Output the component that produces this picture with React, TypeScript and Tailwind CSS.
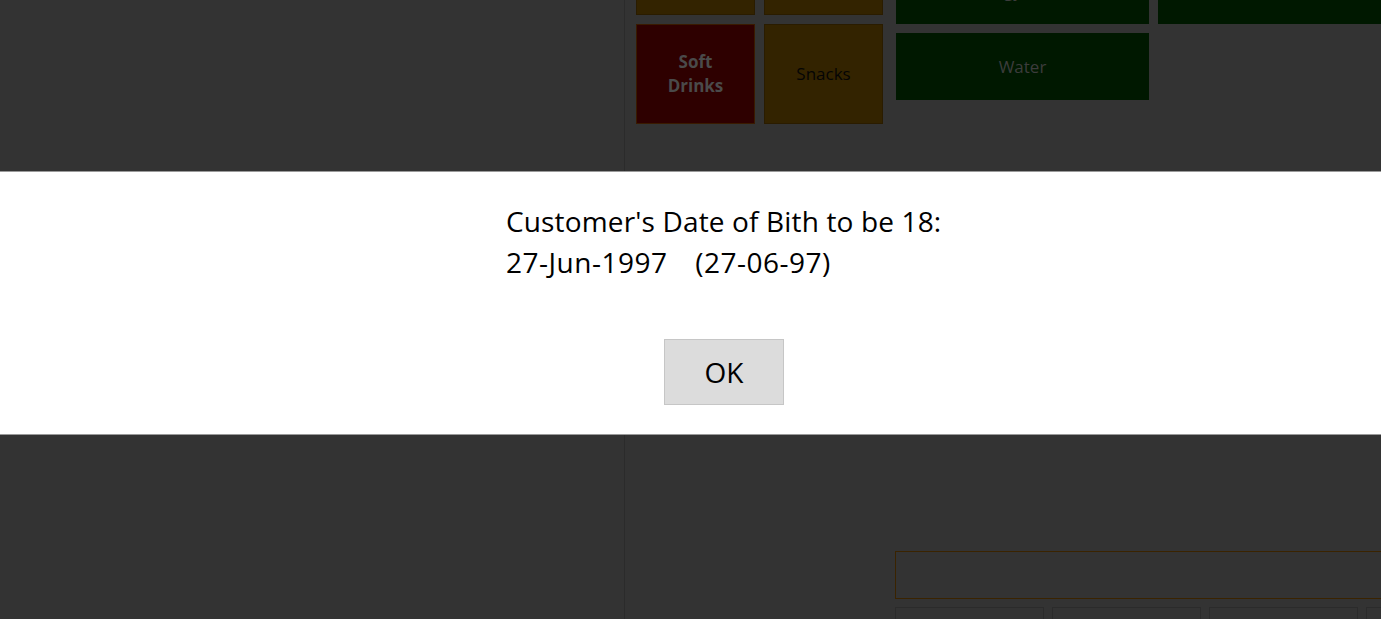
const font = { fontFamily: '"Open Sans", "Noto Sans", sans-serif' };

function Tile({
  className,
  children,
}: {
  className: string;
  children?: React.ReactNode;
}) {
  return (
    <div
      className={`flex items-center justify-center text-center text-[17px] leading-[24px] ${className}`}
    >
      {children}
    </div>
  );
}

export default function App() {
  return (
    <div
      className="relative h-[619px] w-[1381px] overflow-hidden bg-[#333333]"
      style={font}
    >
      <div className="flex h-full">
        <div className="h-full w-[625px] shrink-0 border-r border-[#2b2b2b]" />

        <div className="flex min-w-0 flex-1 flex-col">
          <div className="-mt-[85px] flex items-start gap-[13px] pl-[11px]">
            <div className="grid shrink-0 grid-cols-[119px_119px] gap-[9px]">
              <Tile className="h-[100px] border border-[#2a1c00] bg-[#332300]" />
              <Tile className="h-[100px] border border-[#2a1c00] bg-[#332300]" />
              <Tile className="h-[100px] border border-[#3a1a00] bg-[#2e0000] font-bold text-[#4a4a4a]">
                Soft
                <br />
                Drinks
              </Tile>
              <Tile className="h-[100px] border border-[#2a1c00] bg-[#332300] text-[#050505]">
                Snacks
              </Tile>
            </div>

            <div className="mt-[42px] grid shrink-0 grid-cols-[253px_253px] gap-[9px]">
              <Tile className="h-[67px] bg-[#001800] text-[#3c3c3c]">
                Energy Drinks
              </Tile>
              <Tile className="h-[67px] bg-[#001800]" />
              <Tile className="h-[67px] bg-[#001800] text-[#3c3c3c]">
                Water
              </Tile>
            </div>
          </div>

          <div className="mt-[427px] flex flex-col gap-[8px] pl-[270px]">
            <div className="h-[48px] w-[520px] shrink-0 border border-[#3a2300]" />
            <div className="flex gap-[8px]">
              <div className="h-[40px] w-[149px] shrink-0 border border-[#2b2b2b]" />
              <div className="h-[40px] w-[149px] shrink-0 border border-[#2b2b2b]" />
              <div className="h-[40px] w-[149px] shrink-0 border border-[#2b2b2b]" />
              <div className="h-[40px] w-[149px] shrink-0 border border-[#2b2b2b]" />
            </div>
          </div>
        </div>
      </div>

      {/* age check dialog */}
      <div className="absolute inset-x-0 top-[171px] h-[264px] border-y border-[#9a9a9a] bg-white">
        <div className="ml-[506px] flex w-[436px] flex-col pt-[29px]">
          <div className="text-[28px] leading-[41px] text-black">
            <div className="whitespace-nowrap tracking-[0.15px]">
              Customer's Date of Bith to be 18:
            </div>
            <div className="whitespace-pre tracking-[0.5px] [word-spacing:1.5px]">
              27-Jun-1997   (27-06-97)
            </div>
          </div>
          <button className="mt-[56px] flex h-[66px] w-[120px] items-center justify-center self-center border border-[#c6c6c6] bg-[#dcdcdc] text-[28px] text-black">
            OK
          </button>
        </div>
      </div>
    </div>
  );
}
